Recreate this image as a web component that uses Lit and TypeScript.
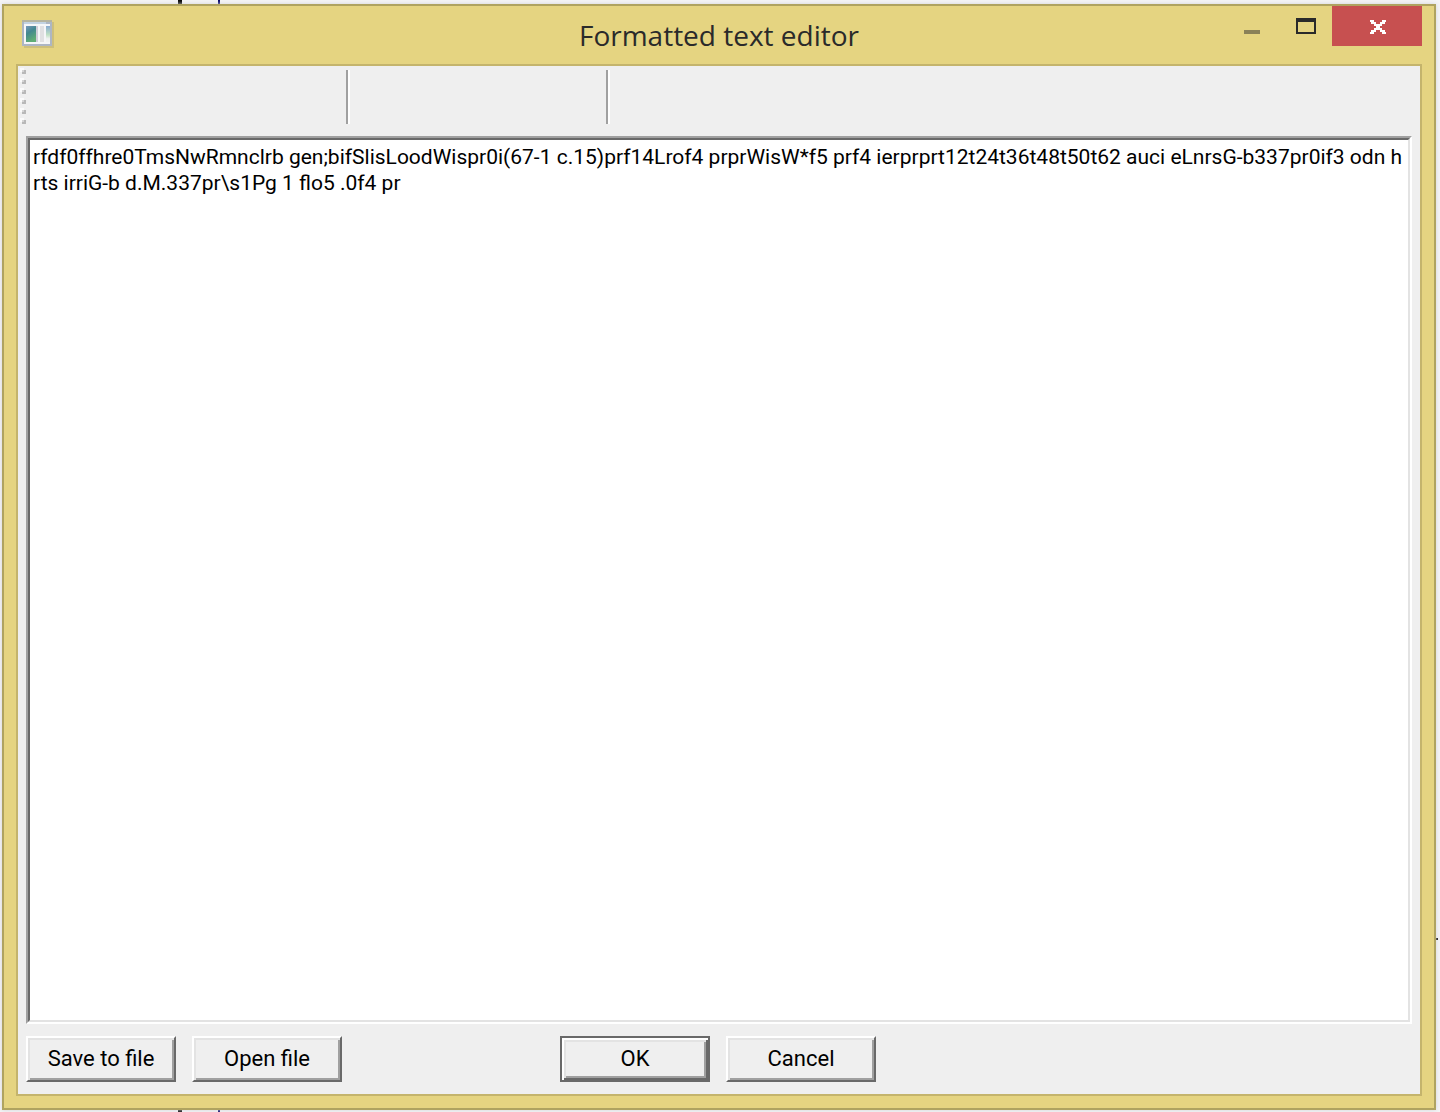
import { LitElement, html, css, svg } from "lit";
import { customElement, state } from "lit/decorators.js";

const DOCUMENT_TEXT =
  "rfdf0ffhre0TmsNwRmnclrb gen;bifSlisLoodWispr0i(67-1 c.15)prf14Lrof4 prprWisW*f5 prf4 ierprprt12t24t36t48t50t62 auci eLnrsG-b337pr0if3 odn h\nrts irriG-b d.M.337pr\\s1Pg 1 flo5 .0f4 pr";

const GRIP_ROWS = [0, 10, 20, 30, 40, 50];

@customElement("editor-titlebar")
export class EditorTitlebar extends LitElement {
  static styles = css`
    :host {
      display: grid;
      grid-template-columns: 1fr auto 1fr;
      height: 58px;
      padding: 0 12px;
    }
    .app-icon {
      display: block;
      margin: 14px 0 0 6px;
    }
    .title {
      margin: 0;
      align-self: center;
      font: 400 28px/40px "Open Sans", "Noto Sans", sans-serif;
      color: #2a2a2a;
      white-space: nowrap;
    }
    .controls {
      display: flex;
      justify-content: flex-end;
      align-items: flex-start;
    }
    .control {
      box-sizing: border-box;
      display: flex;
      align-items: center;
      justify-content: center;
      width: 54px;
      height: 40px;
      padding: 0 0 0 2px;
      border: 0;
      background: transparent;
    }
    .close {
      width: 90px;
      padding-top: 2px;
      background: #c75050;
    }
  `;

  render() {
    return html`
      <svg class="app-icon" width="32" height="28" viewBox="0 0 32 28" shape-rendering="crispEdges" aria-hidden="true">
        <defs>
          <linearGradient id="pane" x1="0" y1="0" x2="0.4" y2="1">
            <stop offset="0" stop-color="#7596bd" />
            <stop offset="0.45" stop-color="#43888f" />
            <stop offset="1" stop-color="#5fad75" />
          </linearGradient>
          <linearGradient id="side" x1="0" y1="0" x2="0" y2="1">
            <stop offset="0" stop-color="#88aad0" />
            <stop offset="0.55" stop-color="#bfe0c4" />
            <stop offset="0.8" stop-color="#f0f2f2" />
          </linearGradient>
        </defs>
        <rect x="2" y="2" width="30" height="26" fill="#cdbf7c" />
        <rect width="30" height="26" fill="#adb6c4" />
        <rect width="30" height="2" fill="#b5b49f" />
        <rect x="2" y="2" width="22" height="2" fill="#c2d2e2" />
        <rect x="2" y="4" width="26" height="20" fill="#f5f6f8" />
        <rect x="4" y="6" width="10" height="16" fill="url(#pane)" />
        <rect x="14" y="6" width="2" height="16" fill="#cfcdd8" />
        <rect x="18" y="6" width="4" height="16" fill="#e0e0e2" />
        <rect x="24" y="6" width="4" height="16" fill="url(#side)" />
      </svg>
      <h1 class="title">Formatted text editor</h1>
      <div class="controls">
        <button class="control" aria-label="Minimize">
          <svg width="16" height="16" viewBox="0 0 16 16" shape-rendering="crispEdges">
            <rect y="12" width="16" height="4" fill="#8a8158" />
          </svg>
        </button>
        <button class="control" aria-label="Maximize">
          <svg width="20" height="16" viewBox="0 0 20 16" shape-rendering="crispEdges">
            <path fill="#2a2a2a" fill-rule="evenodd" d="M0 0H20V16H0ZM2 4V14H18V4Z" />
          </svg>
        </button>
        <button class="control close" aria-label="Close">
          <svg width="16" height="14" viewBox="0 0 16 14" shape-rendering="crispEdges">
            <path
              fill="#fff"
              d="M0 0H4V2H6V4H10V2H12V0H16V2H15V4H12V6H10V8H12V10H15V12H16V14H12V12H10V10H6V12H4V14H0V12H1V10H4V8H6V6H4V4H1V2H0Z"
            />
          </svg>
        </button>
      </div>
    `;
  }
}

@customElement("editor-toolbar")
export class EditorToolbar extends LitElement {
  static styles = css`
    :host {
      display: flex;
      height: 70px;
      padding-left: 2px;
      box-sizing: border-box;
    }
    .grip {
      margin-top: 2px;
    }
    .group {
      box-sizing: border-box;
      height: 54px;
      margin-top: 4px;
      border-right: 2px solid #fff;
      box-shadow: inset -2px 0 #a0a0a0;
    }
    .styles {
      width: 324px;
    }
    .align {
      width: 260px;
    }
  `;

  render() {
    return html`
      <svg class="grip" width="6" height="56" shape-rendering="crispEdges" aria-hidden="true">
        ${GRIP_ROWS.map(
          (y) => svg`
            <rect x="0" y=${y} width="4" height="4" fill="#fafafa" />
            <rect x="2" y=${y + 2} width="4" height="4" fill="#b8b8b8" />
            <rect x="2" y=${y + 2} width="2" height="2" fill="#d4d4d4" />`
        )}
      </svg>
      <div class="group styles"></div>
      <div class="group align"></div>
    `;
  }
}

@customElement("app-root")
export class AppRoot extends LitElement {
  static styles = css`
    :host {
      display: block;
    }
    .desktop {
      position: relative;
      display: flex;
      box-sizing: border-box;
      min-height: 100vh;
      padding: 4px 4px 2px 2px;
      background: #f4f4f5;
    }
    .mark {
      position: absolute;
      background: #000;
    }
    .mark-wide {
      left: 178px;
      top: 0;
      bottom: 0;
      width: 4px;
    }
    .mark-thin {
      left: 218px;
      top: 0;
      bottom: 0;
      width: 2px;
      background: #000068;
    }
    .mark-side {
      right: 2px;
      top: 938px;
      width: 2px;
      height: 2px;
    }
    .window {
      position: relative;
      flex: 1;
      display: flex;
      flex-direction: column;
      border: 2px solid #afa360;
      background: #e5d481;
      box-shadow: 0 0 4px #d4d4d8;
    }
    .client {
      flex: 1;
      display: flex;
      flex-direction: column;
      margin: 0 12px 12px;
      border: 2px solid #c4b46c;
      background: #efefef;
    }
    .frame {
      flex: 1;
      display: flex;
      margin: 0 8px;
      border: 2px solid;
      border-color: #a0a0a0 #fff #fff #a0a0a0;
    }
    .document {
      flex: 1;
      box-sizing: border-box;
      margin: 0;
      padding: 4px 0 4px 3px;
      border: 2px solid;
      border-color: #696969 #e3e3e3 #e3e3e3 #696969;
      border-radius: 0;
      outline: none;
      resize: none;
      background: #fff;
      color: #000;
      font: 21px/26px Roboto, "Liberation Sans", sans-serif;
      overflow: auto;
    }
    .actions {
      display: grid;
      grid-template-columns: 1fr auto 1fr;
      padding: 12px 10px 12px 8px;
    }
    .pair {
      display: flex;
      gap: 16px;
    }
    .push {
      box-sizing: border-box;
      width: 150px;
      height: 46px;
      padding: 0;
      border: 2px solid;
      border-color: #fff #696969 #696969 #fff;
      box-shadow: inset 2px 2px #e3e3e3, inset -2px -2px #a0a0a0;
      background: #efefef;
      color: #000;
      font: 22px/26px Roboto, "Liberation Sans", sans-serif;
      white-space: nowrap;
    }
    .default {
      border-color: #696969;
      box-shadow: inset 2px 2px #fff, inset -2px -2px #696969, inset 4px 4px #e3e3e3,
        inset -4px -4px #a0a0a0;
    }
  `;

  @state() private text = DOCUMENT_TEXT;

  private onInput(event: Event) {
    this.text = (event.target as HTMLTextAreaElement).value;
  }

  render() {
    return html`
      <div class="desktop">
        <span class="mark mark-wide"></span>
        <span class="mark mark-thin"></span>
        <span class="mark mark-side"></span>
        <main class="window">
          <editor-titlebar></editor-titlebar>
          <section class="client">
            <editor-toolbar></editor-toolbar>
            <div class="frame">
              <textarea
                class="document"
                aria-label="Document text"
                spellcheck="false"
                .value=${this.text}
                @input=${this.onInput}
              ></textarea>
            </div>
            <div class="actions">
              <div class="pair">
                <button class="push">Save to file</button>
                <button class="push">Open file</button>
              </div>
              <div class="pair">
                <button class="push default">OK</button>
                <button class="push">Cancel</button>
              </div>
            </div>
          </section>
        </main>
      </div>
    `;
  }
}
